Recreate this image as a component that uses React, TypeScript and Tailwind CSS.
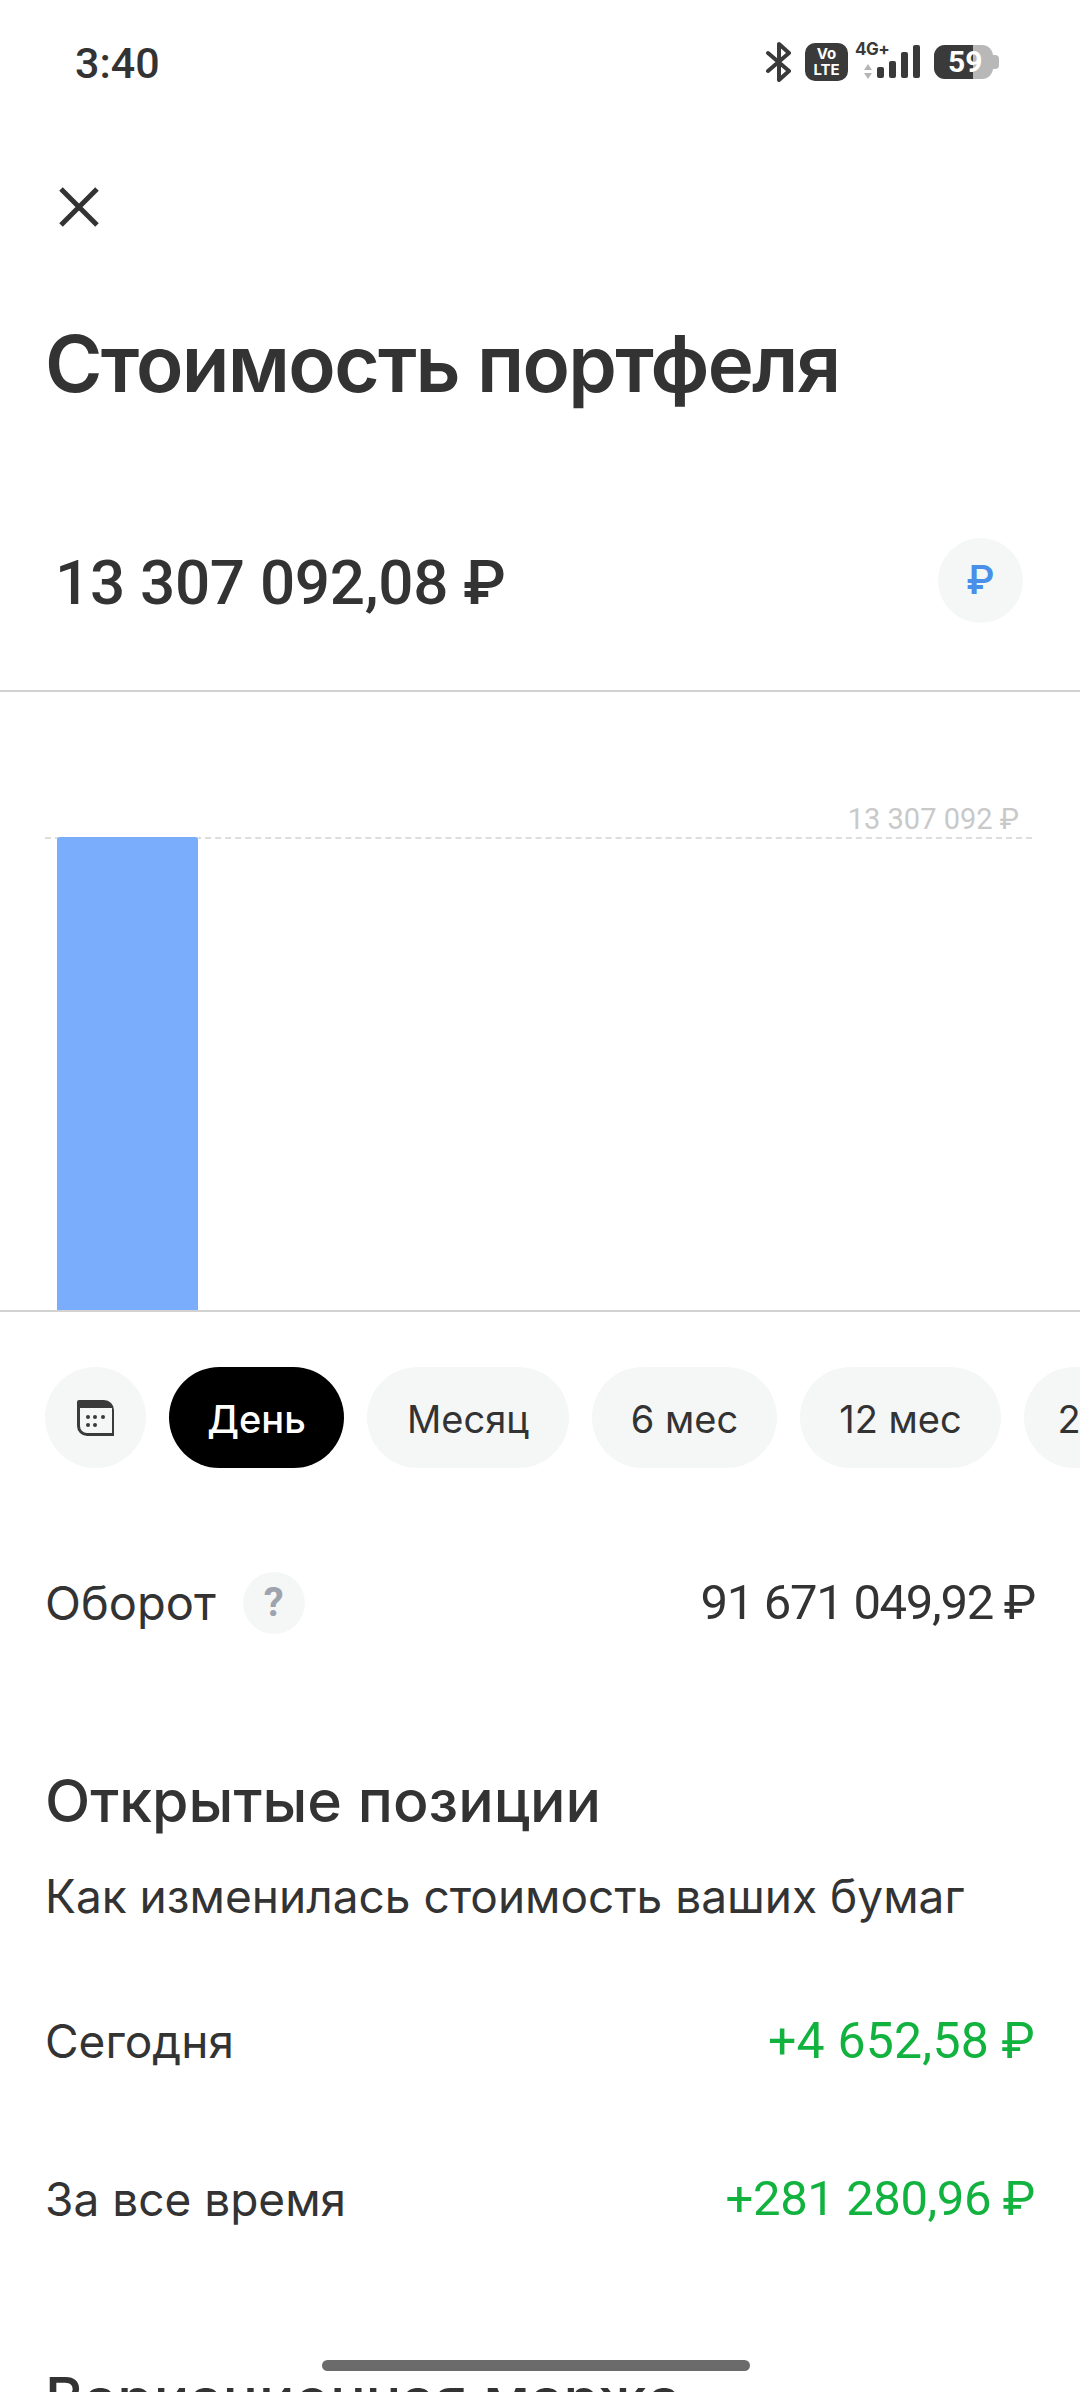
import React from 'react';

const periods = [
  { label: 'Месяц', width: 'w-[202px]' },
  { label: '6 мес', width: 'w-[185px]' },
  { label: '12 мес', width: 'w-[201px]' },
  { label: '2 года', width: 'w-[185px]' },
];

const StatusIcons: React.FC = () => (
  <div className="flex items-center">
    <svg width="27" height="40" viewBox="0 0 27 40" fill="none" stroke="#3a3a3a" strokeWidth="4" strokeLinecap="round" strokeLinejoin="round">
      <path d="M3 11l21 18-10 9V2l10 9L3 29" />
    </svg>
    <div className="ml-[13px] flex h-[38px] w-[43px] flex-col items-center justify-center rounded-[10px] bg-[#3a3a3a] text-[15px] leading-[16px] font-bold text-white">
      <span>Vo</span>
      <span>LTE</span>
    </div>
    <div className="relative ml-[7px] h-[40px] w-[65px]">
      <span className="absolute top-[-3px] left-0 text-[17px] leading-[20px] font-bold tracking-[-0.5px] text-[#3a3a3a]">4G+</span>
      <svg className="absolute top-0 left-0" width="65" height="40" viewBox="0 0 65 40">
        <path d="M13 22l4 6H9zM13 37l4-6H9z" fill="#b5b5b5" />
        <rect x="22" y="25" width="7" height="11" rx="2" fill="#3a3a3a" />
        <rect x="34" y="19" width="7" height="17" rx="2" fill="#3a3a3a" />
        <rect x="46" y="10" width="7" height="26" rx="2" fill="#3a3a3a" />
        <rect x="58" y="3" width="7" height="33" rx="2" fill="#3a3a3a" />
      </svg>
    </div>
    <div className="relative ml-[14px] flex h-[34px] w-[59px] overflow-hidden rounded-[11px] bg-[#b8b8b8]">
      <div className="h-full w-[39px] bg-[#3a3a3a]" />
      <span className="absolute top-0 left-[14px] font-['Roboto',sans-serif] text-[30px] leading-[34px] font-bold text-white">59</span>
    </div>
    <div className="h-[14px] w-[6px] rounded-r-[4px] bg-[#b8b8b8]" />
  </div>
);

const App: React.FC = () => {
  return (
    <div className="relative h-[2392px] w-[1080px] overflow-hidden bg-white font-['Inter',sans-serif] text-[#333333]">
      <div className="flex h-[124px] items-center justify-between pr-[81px] pl-[75px]">
        <span className="pt-[2px] font-['Roboto',sans-serif] text-[43px] font-medium">3:40</span>
        <StatusIcons />
      </div>

      <div className="h-[187px] pt-[63px] pl-[59px]">
        <svg width="40" height="40" viewBox="0 0 40 40" fill="none" stroke="#333333" strokeWidth="5">
          <path d="M2 2l36 36M38 2L2 38" />
        </svg>
      </div>

      <h1 className="h-[105px] pl-[45px] text-[78px] leading-[105px] font-semibold tracking-[-1.7px]">Стоимость портфеля</h1>

      <div className="mt-[122px] flex h-[85px] items-center justify-between pr-[57px] pl-[55px]">
        <span className="pt-[4px] font-['Roboto',sans-serif] text-[62px] font-medium tracking-[-0.3px]">13 307 092,08 ₽</span>
        <div className="flex h-[85px] w-[85px] items-center justify-center rounded-full bg-[#f5f7f6] font-['Roboto',sans-serif] text-[40px] font-medium text-[#4a8fe8]">₽</div>
      </div>

      <div className="relative mt-[67px] h-[622px] border-y-2 border-[#d2d2d2]">
        <div className="absolute top-[145px] left-[45px] w-[987px] border-t-2 border-dashed border-[#dddddd]" />
        <span className="absolute top-[109px] right-[61px] font-['Roboto',sans-serif] text-[29px] leading-[36px] text-[#c9c9c9]">13 307 092 ₽</span>
        <div className="absolute top-[145px] bottom-0 left-[57px] w-[141px] rounded-t-[3px] bg-[#7aadfb]" />
      </div>

      <div className="mt-[55px] flex h-[101px] gap-[23px] overflow-hidden pl-[45px] text-[38px]">
        <div className="flex w-[101px] shrink-0 items-center justify-center rounded-full bg-[#f5f7f6]">
          <svg width="37" height="36" viewBox="0 0 37 36">
            <path fillRule="evenodd" d="M2 0h25a10 10 0 0110 10v26H10A10 10 0 010 26V2a2 2 0 012-2zM3 8v18a7 7 0 007 7h25V8z" fill="#3a3a3a" />
            <g fill="#3a3a3a">
              <circle cx="11" cy="17" r="2" /><circle cx="18" cy="17" r="2" /><circle cx="26" cy="17" r="2" />
              <circle cx="11" cy="25" r="2" /><circle cx="18" cy="25" r="2" />
            </g>
          </svg>
        </div>
        <div className="flex w-[175px] shrink-0 items-center justify-center rounded-full bg-black pt-[4px] font-medium text-white">День</div>
        {periods.map((p) => (
          <div key={p.label} className={`flex shrink-0 items-center justify-center rounded-full bg-[#f5f7f6] pt-[4px] ${p.width}`}>{p.label}</div>
        ))}
      </div>

      <div className="mt-[104px] flex h-[62px] items-center justify-between pr-[45px] pl-[45px] text-[47px]">
        <div className="flex items-center">
          <span>Оборот</span>
          <div className="ml-[27px] flex h-[62px] w-[62px] items-center justify-center rounded-full bg-[#f5f7f6] font-['Roboto',sans-serif] text-[40px] font-bold text-[#9ea3ad]">?</div>
        </div>
        <span className="font-['Roboto',sans-serif] text-[49px] tracking-[-1.3px]">91 671 049,92 ₽</span>
      </div>

      <h2 className="mt-[129px] pl-[45px] text-[59px] leading-[76px] font-medium">Открытые позиции</h2>
      <p className="mt-[29px] pl-[45px] text-[46px] leading-[56px]">Как изменилась стоимость ваших бумаг</p>

      <div className="mt-[85px] flex h-[64px] items-center justify-between pr-[45px] pl-[45px] text-[46px]">
        <span>Сегодня</span>
        <span className="font-['Roboto',sans-serif] text-[50px] tracking-[0.2px] text-[#12b23f]">+4 652,58 ₽</span>
      </div>
      <div className="mt-[94px] flex h-[64px] items-center justify-between pr-[45px] pl-[45px] text-[46px]">
        <span>За все время</span>
        <span className="font-['Roboto',sans-serif] text-[49px] tracking-[-0.4px] text-[#12b23f]">+281 280,96 ₽</span>
      </div>

      <h2 className="mt-[130px] pl-[45px] text-[59px] leading-[76px] font-medium">Вариационная маржа</h2>

      <div className="absolute bottom-[21px] left-[322px] h-[11px] w-[428px] rounded-full bg-[#6b6b6b]" />
    </div>
  );
};

export default App;
